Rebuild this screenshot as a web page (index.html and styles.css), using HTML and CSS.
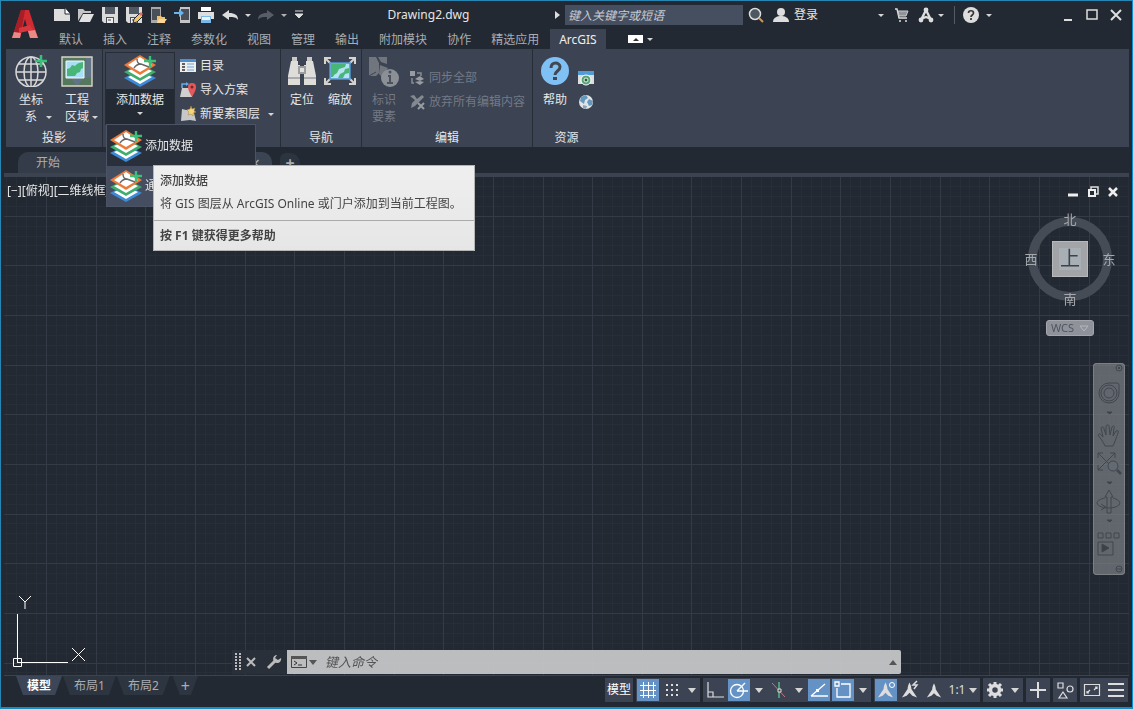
FILE: index.html
```
<!DOCTYPE html>
<html lang="zh-CN">
<head>
<meta charset="UTF-8">
<title>Drawing2.dwg</title>
<link rel="stylesheet" href="styles.css">
</head>
<body>
<svg class="defs" aria-hidden="true">
	<symbol id="layers" viewBox="0 0 32 32">
		<path d="M0 23l16-8 16 8-16 9z" fill="#3c8bd8"/><path d="M4 22l12-5 12 5-12 7z" fill="#fff"/>
		<path d="M0 17l16-8 16 8-16 9z" fill="#3fae6c"/><path d="M4 16l12-5 12 5-12 7z" fill="#fff"/>
		<path d="M0 10l16-10 16 10-16 10z" fill="#ec7a3a"/><path d="M4 10l12-8 12 8-12 7z" fill="#fff"/>
		<path d="M13 4c0 4 2 5 4 5l8 3M17 9c-2 0-5 1-7 4" fill="none" stroke="#666" stroke-width="1.4"/>
		<path d="M26 1v11M20 6h12" stroke="#3bc07a" stroke-width="2.4"/>
	</symbol>
	<symbol id="floppy" viewBox="0 0 18 18">
		<path d="M1 1h16v16H3l-2-2z" fill="#dadada"/><path d="M4 1h10v7H4z" fill="#505864"/><path d="M5 11h8v6H5z" fill="#4b525d"/><path d="M6 12h6v5H6z" fill="#eee"/><path d="M7 14h3" stroke="#444"/>
	</symbol>
	<symbol id="undo" viewBox="0 0 18 18"><path d="M1 9l7-5v3c6 0 9 2 9 7-2-3-4-3-9-3v3z" fill="currentColor"/></symbol>
	<symbol id="person-a" viewBox="0 0 18 18"><path d="M9 1c1 2 2 4 2 7l6 9-5-2-3-3-3 3-5 2 6-9c0-3 1-5 2-7z" fill="currentColor"/></symbol>
</svg>
<div class="window">
	<header class="top">
		<button class="logo" aria-label="A">
			<svg width="28" height="32" viewBox="0 0 28 32"><path d="M1 29L10 1h8l9 28h-8l-5-19-5 19z" fill="#d02a33"/><path d="M10 1h4L9 29H1z" fill="#a81d26"/><path d="M8 19l11-3 3 5-14 3z" fill="#d8363e"/><path d="M1 29l2-6 7 1-1 5zM19 29l-2-7 7-1 3 8z" fill="#e88a86"/></svg>
		</button>
		<div class="rows">
			<div class="titlebar">
				<div class="quick">
					<button aria-label="新建"><svg width="18" height="18"><path d="M1 3h11l5 5v7H1z" fill="#ddd"/><path d="M12 2v6h5" fill="#fff" stroke="#222932"/></svg></button>
					<button aria-label="打开"><svg width="18" height="18"><path d="M1 15V3h5l2 2h6v2H6z" fill="#c4c4c4"/><path d="M6 8h11l-4 8H2z" fill="#e2e2e2"/></svg></button>
					<button aria-label="保存"><svg width="18" height="18"><use href="#floppy"/></svg></button>
					<button aria-label="另存为"><svg width="18" height="18"><use href="#floppy"/><path d="M8 17l1-4 6-6 3 3-6 6z" fill="#f0c56e" stroke="#222932"/><path d="M14 8l2-2 2 2-2 2z" fill="#e06f63"/></svg></button>
					<button aria-label="从云中打开"><svg width="18" height="18"><path d="M2 1h10v16H2z" fill="#a8a8a8"/><path d="M3 3h8v11H3z" fill="#4a505a"/><path d="M8 10h4l1 1h3v6H8z" fill="#eec072"/><path d="M10 13h8l-3 4H8z" fill="#f7d793"/></svg></button>
					<button aria-label="保存到云"><svg width="18" height="18"><path d="M7 1h10v16H7z" fill="#c4c4c4"/><path d="M8 3h8v11H8z" fill="#4a505a"/><path d="M1 6h5V3l5 4-5 4V8H1z" fill="#65b5ef"/></svg></button>
					<button aria-label="打印"><svg width="18" height="18"><path d="M4 1h10v4H4z" fill="#fff"/><path d="M1 6h16v7H1z" fill="#ddd"/><path d="M4 10h10v7H4z" fill="#7bb8e8"/><path d="M5 11h8v3H5z" fill="#e9f3fb"/></svg></button>
					<button aria-label="放弃"><svg width="18" height="18"><use href="#undo"/></svg></button>
					<button class="drop" aria-label="放弃列表"><i class="caret"></i></button>
					<button class="off" aria-label="重做"><svg width="18" height="18"><g transform="matrix(-1 0 0 1 18 0)"><use href="#undo" width="18" height="18"/></g></svg></button>
					<button class="drop off" aria-label="重做列表"><i class="caret"></i></button>
					<button class="more" aria-label="自定义"><svg width="10" height="10"><path d="M1 1h8M1 4h8L5 8z" stroke="#ddd" fill="#ddd"/></svg></button>
				</div>
				<h1 class="title">Drawing2.dwg</h1>
				<button class="expand" aria-label="收拢"><svg width="5" height="8"><path d="M0 0l5 4-5 4z" fill="#ddd"/></svg></button>
				<input class="search" type="text" aria-label="搜索" placeholder="键入关键字或短语">
				<button class="find" aria-label="查找"><svg width="16" height="16"><circle cx="7" cy="7" r="5.500" fill="#4d5763" stroke="#ddd" stroke-width="1.500"/><path d="M11 11l4 4" stroke="#c99a60" stroke-width="2"/></svg></button>
				<button class="login"><svg width="16" height="16"><circle cx="8" cy="5" r="4" fill="#ddd"/><path d="M0 15c0-5 5-6 8-6s8 1 8 6z" fill="#ddd"/></svg><span>登录</span><i class="caret"></i></button>
				<button class="cart" aria-label="商店"><svg width="14" height="14"><path d="M0 1h2l2 9h8" fill="none" stroke="#ddd" stroke-width="1.4"/><path d="M3 3h10l-2 5H4z" fill="#8f939a" stroke="#ccc"/><circle cx="5" cy="13" r="1" fill="#ddd"/><circle cx="11" cy="13" r="1" fill="#ddd"/></svg></button>
				<button class="apps" aria-label="应用"><svg width="16" height="16"><path d="M8 3L3 13M8 3l5 10M3 12l5-2 5 2" fill="none" stroke="#ddd" stroke-width="2.4"/><circle cx="8" cy="3" r="2.4" fill="#ddd"/><circle cx="3" cy="13" r="2.4" fill="#ddd"/><circle cx="13" cy="13" r="2.4" fill="#ddd"/></svg><i class="caret"></i></button>
				<button class="help" aria-label="帮助"><svg width="16" height="16"><circle cx="8" cy="8" r="8" fill="#ddd"/><path d="M5.500 6c0-3 5-3 5 0 0 2-2.500 2-2.500 4M8 11v2" fill="none" stroke="#333" stroke-width="1.7"/></svg><i class="caret"></i></button>
				<div class="wincontrols">
					<button aria-label="最小化"><svg width="14" height="14"><path d="M3 12h8" stroke="#ddd" stroke-width="2"/></svg></button>
					<button aria-label="最大化"><svg width="14" height="14"><path d="M2 2h10v9H2z" fill="none" stroke="#ddd" stroke-width="1.500"/></svg></button>
					<button aria-label="关闭"><svg width="14" height="14"><path d="M2 2l10 10M12 2L2 12" stroke="#ddd" stroke-width="2"/></svg></button>
				</div>
			</div>
			<nav class="tabs">
				<a href="#">默认</a>
				<a href="#">插入</a>
				<a href="#">注释</a>
				<a href="#">参数化</a>
				<a href="#">视图</a>
				<a href="#">管理</a>
				<a href="#">输出</a>
				<a href="#">附加模块</a>
				<a href="#">协作</a>
				<a href="#">精选应用</a>
				<a href="#" class="active">ArcGIS</a>
				<button aria-label="最小化功能区"><svg width="15" height="8"><path d="M0 0h15v8H0z" fill="#fff"/><path d="M5 6l3-3 3 3z" fill="#333"/></svg><i class="caret"></i></button>
			</nav>
		</div>
	</header>

	<section class="ribbon">
		<div class="panel">
			<div class="tools">
				<button class="big">
					<svg width="32" height="32"><g fill="none" stroke="#d8d8d8" stroke-width="1.500"><circle cx="16" cy="17" r="15"/><ellipse cx="16" cy="17" rx="7" ry="15"/><path d="M16 2v30M1 17h30M4 9h24M4 25h24"/></g><path d="M26 0v12M20 6h12" stroke="#3bc07a" stroke-width="2.500"/></svg>
					<span>坐标<br>系</span><i class="caret"></i>
				</button>
				<button class="big">
					<svg width="32" height="32"><path d="M1 2h30v29H1z" fill="#55785d" stroke="#d8d5c8" stroke-width="1.400"/><path d="M25 3h5v19l-8 2v-4h3zM11 22h10v3l-4 5h-2l-4-5z" fill="#617386"/><path d="M5 6h18v17H5z" fill="#a9dff5" stroke="#f4f8fa"/><path d="M6 21v-7l3-1 2-3 3 1 2-2 2-1 4-1v6l-2 1-1 3-3 1-2 3z" fill="#49b678"/></svg>
					<span>工程<br>区域</span><i class="caret"></i>
				</button>
			</div>
			<h2>投影</h2>
		</div>
		<div class="panel data">
			<div class="tools">
				<button class="big split">
					<svg width="32" height="32"><use href="#layers"/></svg>
					<span>添加数据</span><i class="caret"></i>
				</button>
				<div class="small">
					<button><svg width="16" height="16"><path d="M0 1h16v13H0z" fill="#eee"/><path d="M0 1h16v3H0z" fill="#4b8fd0"/><path d="M2 6h3M2 9h3M2 12h3" stroke="#333" stroke-width="1.500"/><path d="M7 6h7M7 9h7M7 12h7" stroke="#6ba6da"/></svg>目录</button>
					<button><svg width="16" height="16"><path d="M2 6h10v9H0z" fill="#d0d0d0"/><path d="M2 6V2h5" stroke="#65aee8" stroke-width="1.500" fill="none"/><path d="M6 0l3 2-3 2z" fill="#65aee8"/><path d="M12 15C9 10 8 7 8 5a4 4 0 018 0c0 2-1 5-4 10z" fill="#e45859"/><circle cx="12" cy="5" r="1.500" fill="#78272b"/></svg>导入方案</button>
					<button><svg width="16" height="16"><path d="M2 3l4 1 7-1 3 12-6-1-9 1z" fill="#c8c8c8"/><path d="M11 0l1 3 3-1-1 3 2 1-3 1v3l-2-2-3 1 1-3-2-2 3-1z" fill="#f6d579" stroke="#a78547" stroke-width=".5"/></svg>新要素图层<i class="caret"></i></button>
				</div>
			</div>
		</div>
		<div class="panel navi">
			<div class="tools">
				<button class="big">
					<svg width="32" height="32"><path d="M5 6h7v4h2v20H2v-9zM20 6h7l3 15v9H18V10h2z" fill="#deddda"/><path d="M6 2h5v4H6zM21 2h5v4h-5z" fill="#cbc9c5"/><path d="M12 11h8v8h-8z" fill="#9d9d9e"/><path d="M14 13h4v4h-4z" fill="#e2e1df"/><path d="M2 23h12M18 23h12" stroke="#77797e"/></svg>
					<span>定位</span>
				</button>
				<button class="big">
					<svg width="32" height="32"><g stroke="#d6d3cf" stroke-width="2" fill="none"><path d="M1 9V3h6M25 3h6v6M31 23v6h-6M7 29H1v-6M2 4l5 5M30 4l-5 5M2 28l5-5M30 28l-5-5"/></g><path d="M6 8h20v16H6z" fill="#b5e2f5" stroke="#5095d2" stroke-width="1.500"/><path d="M7 9h15l-1 3-6 2-2 4-3 2-1 2H7zM14 23l2-4 4-2 1-3 4-1v5l-4 1-2 4z" fill="#49b678"/></svg>
					<span>缩放</span>
				</button>
			</div>
			<h2>导航</h2>
		</div>
		<div class="panel edit">
			<div class="tools">
				<button class="big" disabled>
					<svg width="32" height="32"><path d="M1 2h7l3 6v10l-3 3H1zM10 2h9v7l-6-2zM12 10l8 3-6 9-3-3z" fill="#71757e"/><path d="M1 21l7-4" stroke="#3c4453"/><circle cx="22" cy="23" r="9" fill="#8b8f96"/><path d="M20 21h2v7M19 28h6" fill="none" stroke="#4b525f" stroke-width="2"/><circle cx="22" cy="17" r="1.500" fill="#4b525f"/></svg>
					<span>标识<br>要素</span>
				</button>
				<div class="small low">
					<button disabled><svg width="16" height="16"><path d="M1 1h5v5H1z" fill="#989ba1"/><path d="M8 3h4v3M3 8v5h2" fill="none" stroke="#878b92" stroke-width="1.500"/><path d="M6 9l5-3 4 3-4 2zM6 12l5 3 4-3-4-1z" fill="#989ba1"/></svg>同步全部</button>
					<button disabled><svg width="16" height="16"><path d="M1 2l4-1 3 4 5-4 2 2-9 9-4 2 1-5 3-3z" fill="#858990"/><path d="M9 9l6 6M15 9l-6 6" stroke="#989ba1" stroke-width="2"/></svg>放弃所有编辑内容</button>
				</div>
			</div>
			<h2>编辑</h2>
		</div>
		<div class="panel res">
			<div class="tools">
				<button class="big">
					<svg width="32" height="32"><circle cx="16" cy="16" r="14" fill="#7fc1f4"/><path d="M12 13c0-7 9-6 9-1 0 4-5 4-5 8" fill="none" stroke="#43474f" stroke-width="3"/><path d="M14 22h4v3h-4z" fill="#43474f"/></svg>
					<span>帮助</span>
				</button>
				<div class="small low">
					<button aria-label="论坛"><svg width="16" height="16"><path d="M0 1h16v13H0z" fill="#ddd"/><path d="M0 1h16v4H0z" fill="#519bd8"/><circle cx="8" cy="10" r="5" fill="#55a577" stroke="#fff"/><circle cx="8" cy="10" r="2" fill="#245f3d" stroke="#eee"/></svg></button>
					<button aria-label="关于"><svg width="16" height="16"><circle cx="8" cy="8" r="7" fill="#e2e4e6"/><path d="M3 3l5-2 2 3-3 2-1 4-4-3zM11 5l4 2-1 4-3 1-2-4z" fill="#6598bd"/><path d="M5 11l4 1-1 3-3-1z" fill="#8ba5b8"/></svg></button>
				</div>
			</div>
			<h2>资源</h2>
		</div>
		<div class="menu">
			<button><svg width="32" height="32"><use href="#layers"/></svg>添加数据</button>
			<button class="lit"><svg width="32" height="32"><use href="#layers"/></svg>通过</button>
			<div class="tooltip" role="tooltip">
				<b>添加数据</b>
				<p>将 GIS 图层从 ArcGIS Online 或门户添加到当前工程图。</p>
				<strong>按 F1 键获得更多帮助</strong>
			</div>
		</div>
	</section>

	<nav class="files">
		<a href="#" class="start">开始</a>
		<a href="#" class="drawing">×</a>
		<button aria-label="新图形">+</button>
	</nav>

	<main class="drawingarea">
		<canvas id="grid"></canvas>
		<div class="viewlabel">[−][俯视][二维线框]</div>
		<div class="docbuttons">
			<button aria-label="最小化视口"><svg width="12" height="12"><path d="M1 9h10" stroke="#eee" stroke-width="3"/></svg></button>
			<button aria-label="还原视口"><svg width="12" height="12"><path d="M4 3V1h7v7H9" fill="none" stroke="#ddd" stroke-width="1.500"/><path d="M2 4h6v6H2z" fill="none" stroke="#eee" stroke-width="2"/></svg></button>
			<button aria-label="关闭视口"><svg width="12" height="12"><path d="M2 2l8 8M10 2l-8 8" stroke="#eee" stroke-width="2.500"/></svg></button>
		</div>
		<div class="cube">
			<span class="north">北</span>
			<span class="west">西</span>
			<button class="face">上</button>
			<span class="east">东</span>
			<span class="south">南</span>
		</div>
		<button class="wcs">WCS <svg width="10" height="7"><path d="M1 1h8L5 6z" fill="none" stroke="#b3b6bc"/></svg></button>
		<div class="navbar">
			<svg width="32" height="212" viewBox="0 0 32 212" fill="none" stroke="#41474f">
				<circle cx="26" cy="5" r="3"/><path d="M25 4l2 2M27 4l-2 2"/>
				<path d="M16 20h8q2 0 2 2v8a10 10 0 11-10-10z"/><circle cx="16" cy="30" r="5"/><circle cx="16" cy="30" r="8"/>
				<path d="M14 49h5l-2 2z" fill="#3b4149"/>
				<path d="M12 83c-2-5-5-8-7-11 1-2 3-1 5 2l-2-9c1-2 3-1 3 1l2 6V63c1-2 3-1 3 0l1 9 2-8c1-2 3-1 2 1l-1 8 3-5c2-1 3 0 2 2-2 5-3 9-5 13z"/>
				<path d="M5 90l17 17M22 90L5 107M5 95v-5h5M17 90h5v5M5 102v5h5"/><circle cx="20" cy="103" r="5" fill="#646a72"/><path d="M24 107l4 4" stroke-width="2.500"/>
				<path d="M14 119h5l-2 2z" fill="#3b4149"/>
				<path d="M14 150v-16h-2l4-7 4 7h-2v16z"/><path d="M12 135c-11 2-11 9 3 10 13 0 16-7 5-10M8 141l5 3-5 3"/>
				<path d="M14 157h5l-2 2z" fill="#3b4149"/>
				<path d="M5 170h5v5H5zM13 170h5v5h-5zM21 170h5v5h-5zM5 179h15v13H5z"/><path d="M9 181l7 4-7 4z" fill="#3b4149"/>
				<circle cx="26" cy="206" r="3"/><path d="M24 206h4"/>
			</svg>
		</div>
		<svg class="ucs" width="80" height="76" fill="none" stroke="#fff"><path d="M13.500 68V20M18 68.500h46M9.500 64.500h8v8h-8zM13.500 64v5M13 68.500h5" stroke-width="1"/><path d="M15 2l6 6 6-6M21 8v7M68 54l13 13M81 54L68 67"/></svg>
		<form class="command">
			<div class="handle">
				<svg width="6" height="18"><path d="M1 0v18M5 0v18" stroke="#bbb" stroke-width="2" stroke-dasharray="2 1"/></svg>
				<button type="button" aria-label="关闭命令行"><svg width="10" height="10"><path d="M1 1l8 8M9 1L1 9" stroke="#bbb" stroke-width="2"/></svg></button>
				<button type="button" class="wrench" aria-label="自定义命令行"><svg width="16" height="16"><path d="M2 14l8-8" stroke="#bbb" stroke-width="3"/><path d="M15 4a4 4 0 11-4-3L9 4l3 2z" fill="#bbb"/></svg></button>
			</div>
			<div class="line">
				<button type="button" aria-label="最近使用的命令"><svg width="16" height="12"><path d="M.5.500h15v11H.5z" fill="none" stroke="#444"/><path d="M0 0h16v3H0z" fill="#555"/><path d="M3 5l3 2-3 2M7 9h4" fill="none" stroke="#333"/></svg><i class="caret wide"></i></button>
				<input type="text" aria-label="命令" placeholder="键入命令">
				<button type="button" aria-label="命令历史"><svg width="8" height="5"><path d="M0 5l4-5 4 5z" fill="#555"/></svg></button>
			</div>
		</form>
	</main>

	<footer class="bottom">
		<nav class="layouts">
			<a href="#" class="active">模型</a>
			<a href="#">布局1</a>
			<a href="#">布局2</a>
			<button aria-label="新布局">+</button>
		</nav>
		<div class="status">
			<div class="group"><button class="text">模型</button></div>
			<div class="group">
				<button class="on" aria-label="栅格"><svg width="20" height="20"><path d="M5.500 2v16M10.500 2v16M15.500 2v16M2 5.500h16M2 10.500h16M2 15.500h16" fill="none" stroke="#fff"/></svg></button>
				<button aria-label="捕捉"><svg width="20" height="20"><path d="M4 5h13M4 10h13M4 15h13" stroke="#ddd" stroke-width="2" stroke-dasharray="2 3"/></svg></button>
				<button class="drop" aria-label="捕捉设置"><i class="caret wide"></i></button>
			</div>
			<div class="group">
				<button aria-label="正交"><svg width="20" height="20"><path d="M3 2v15h16M3 12h5v5" fill="none" stroke="#ddd" stroke-width="1.200"/></svg></button>
				<button class="on" aria-label="极轴追踪"><svg width="20" height="20"><circle cx="8" cy="11" r="6.500" fill="none" stroke="#fff" stroke-width="1.300"/><path d="M8 11h11M8 11l8-8" stroke="#fff" stroke-width="1.300"/></svg></button>
				<button class="drop" aria-label="极轴设置"><i class="caret wide"></i></button>
				<button aria-label="等轴测"><svg width="20" height="20"><path d="M3 3l13 14" stroke="#c87575"/><path d="M10 2v16" stroke="#50b984" stroke-width="1.500"/><path d="M9 9h3v3H9z" fill="#3c4453" stroke="#ddd"/></svg></button>
				<button class="drop" aria-label="等轴测设置"><i class="caret wide"></i></button>
				<button class="on" aria-label="对象捕捉追踪"><svg width="20" height="20"><path d="M2 16L16 4M2 16h17" stroke="#fff" stroke-width="1.300"/><path d="M7 9h3v3H7z" fill="#fff"/></svg></button>
				<button class="on" aria-label="对象捕捉"><svg width="20" height="20"><path d="M8 4h9v13H4V8" fill="none" stroke="#fff" stroke-width="1.300"/><path d="M2 2h4v4H2z" fill="none" stroke="#fff" stroke-width="1.300"/></svg></button>
				<button class="drop" aria-label="捕捉列表"><i class="caret wide"></i></button>
			</div>
			<div class="group">
				<button class="on" aria-label="注释可见性"><svg width="20" height="20"><use href="#person-a" x="1" y="1" width="17" height="18"/><circle cx="16" cy="5" r="2.500" fill="#6592c5" stroke="#fff"/></svg></button>
				<button aria-label="自动缩放"><svg width="20" height="20"><use href="#person-a" x="1" y="1" width="17" height="18"/><path d="M17 1l-4 4h4l-3 4" stroke="#ddd" fill="none" stroke-width="1.500"/></svg></button>
				<button aria-label="注释"><svg width="20" height="20"><use href="#person-a" x="2" y="2" width="16" height="17"/></svg></button>
				<button class="scale">1:1<i class="caret wide"></i></button>
			</div>
			<div class="group">
				<button aria-label="切换工作空间"><svg width="20" height="20"><circle cx="10" cy="10" r="4.500" fill="none" stroke="#ddd" stroke-width="3.500"/><path d="M10 2v3M10 15v3M2 10h3M15 10h3M4 4l3 3M13 13l3 3M16 4l-3 3M7 13l-3 3" stroke="#ddd" stroke-width="3"/></svg></button>
				<button class="drop" aria-label="工作空间列表"><i class="caret wide"></i></button>
			</div>
			<div class="group"><button aria-label="注释监视器"><svg width="20" height="20"><path d="M10 2v16M2 10h16" stroke="#ddd" stroke-width="2"/></svg></button></div>
			<div class="group"><button aria-label="隔离对象"><svg width="20" height="20"><path d="M3 3h5v5H3zM8 12l4 6H4z" fill="none" stroke="#ddd" stroke-width="1.200"/><circle cx="15" cy="9" r="3" fill="none" stroke="#ddd" stroke-width="1.200"/></svg></button></div>
			<div class="group">
				<button aria-label="全屏显示"><svg width="20" height="20"><path d="M2.500 4.500h15v11h-15zM5 13l3-3M12 10l3-3M5 11v2h2M13 7h2v2" fill="none" stroke="#ddd" stroke-width="1.200"/></svg></button>
				<button aria-label="自定义"><svg width="20" height="20"><path d="M2 4h16M2 10h16M2 16h16" stroke="#ddd" stroke-width="2"/></svg></button>
			</div>
		</div>
	</footer>
</div>
<script src="grid.js"></script>
</body>
</html>
```

FILE: styles.css
```
* {
	box-sizing: border-box;
}
body {
	margin: 0;
	font-family: "Noto Sans", "Noto Sans CJK SC", sans-serif;
	font-size: 12px;
	line-height: 16px;
	color: #e6e6e6;
	background-color: #222932;
}
button, input {
	font: inherit;
	color: inherit;
	background: none;
	border: 0;
	padding: 0;
	margin: 0;
}
button {
	display: flex;
	align-items: center;
	justify-content: center;
	flex: none;
	white-space: nowrap;
}
a {
	color: inherit;
	text-decoration: none;
}
svg {
	display: block;
	flex: none;
}
h1, h2, p {
	margin: 0;
	font-size: 12px;
	font-weight: normal;
}
.defs {
	position: absolute;
	width: 0;
	height: 0;
}
.window {
	display: flex;
	flex-direction: column;
	height: 100vh;
	padding: 0 3px;
	border: 1px solid #2687b5;
	border-right-color: #0a90d4;
	border-bottom: 2px solid #148dc5;
}
.caret {
	width: 0;
	height: 0;
	border: 3px solid transparent;
	border-top-color: #d5d5d5;
	border-bottom: 0;
}
.caret.wide {
	border-width: 4px;
	border-top-width: 5px;
	border-bottom: 0;
}

/* title bar */
.top {
	display: flex;
	height: 48px;
}
.logo {
	width: 42px;
}
.rows {
	flex: 1;
}
.titlebar {
	display: flex;
	align-items: center;
	height: 28px;
	padding-left: 4px;
}
.quick {
	display: flex;
	color: #ddd;
}
.quick button {
	width: 24px;
	height: 24px;
}
.quick .drop {
	width: 12px;
}
.quick .more {
	width: 18px;
}
.quick .off {
	color: #666b73;
	opacity: .8;
}
.title {
	flex: 1;
	text-align: center;
}
.expand {
	width: 16px;
}
.search {
	width: 178px;
	height: 20px;
	padding: 0 3px;
	background-color: #464f60;
}
.search::placeholder {
	font-style: italic;
	color: #c8ccd2;
	opacity: 1;
}
.find {
	width: 26px;
}
.login {
	width: 120px;
	gap: 5px;
	justify-content: flex-start;
	padding: 0 4px;
}
.login .caret {
	margin-left: auto;
	margin-right: 1px;
}
.cart {
	width: 26px;
}
.apps {
	gap: 4px;
	padding: 0 10px 0 3px;
	border-right: 1px solid #545b66;
	height: 18px;
}
.help {
	gap: 7px;
	padding: 0 8px;
}
.wincontrols {
	display: flex;
	margin-left: 56px;
	padding-right: 1px;
}
.wincontrols button {
	width: 24px;
	height: 24px;
}
.tabs {
	display: flex;
	height: 20px;
	padding-left: 3px;
	color: #a9adb4;
}
.tabs a {
	flex: none;
	padding: 0 10px;
	line-height: 22px;
}
.tabs .active {
	margin-left: 1px;
	padding: 0 9px;
	color: #eee;
	background-color: #3c4453;
}
.tabs button {
	gap: 4px;
	margin-left: 22px;
}

/* ribbon */
.ribbon {
	position: relative;
	display: flex;
	height: 98px;
	margin: 0 0 0 2px;
	background-color: #3c4453;
}
.panel {
	display: flex;
	flex-direction: column;
	justify-content: space-between;
	border-right: 1px solid #262d37;
	padding: 0 3px;
}
.panel h2 {
	text-align: center;
	line-height: 18px;
}
.tools {
	display: flex;
	gap: 2px;
}
.big {
	display: grid;
	grid-template-columns: 8px 1fr 8px;
	grid-row-gap: 4px;
	width: 44px;
	padding-top: 6px;
	line-height: 17px;
	align-content: start;
	justify-items: center;
}
.big svg {
	grid-column: 1 / 4;
}
.big span {
	grid-column: 2;
}
.big .caret {
	align-self: end;
	margin-bottom: 6px;
}
.data {
	width: 178px;
	padding: 0 2px;
}
.big.split {
	width: 70px;
	height: 73px;
	margin-top: 3px;
	padding-top: 2px;
	border: 1px solid #262d37;
	background: linear-gradient(#3c4453 36px, #232a33 36px);
}
.split .caret {
	grid-column: 2;
	margin: 0;
}
.small {
	padding: 5px 0 0 3px;
}
.small.low {
	padding-top: 17px;
}
.small button {
	gap: 4px;
	height: 24px;
}
.small .caret {
	margin-left: 4px;
}
.navi {
	padding: 0 2px;
}
.navi .tools, .edit .tools, .res .tools {
	gap: 0;
}
.navi .big {
	width: 38px;
	grid-template-columns: 1px 1fr 1px;
}
.edit {
	width: 171px;
	padding: 0;
}
button:disabled {
	color: #737985;
}
.res {
	border: 0;
	padding: 0;
}
.res .small {
	padding: 17px 6px 0 1px;
}

/* open split menu and its tip */
.menu {
	position: absolute;
	z-index: 2;
	left: 100px;
	top: 75px;
	width: 150px;
	padding-top: 1px;
	border: 1px solid #4b5364;
	background-color: #29303b;
}
.menu button {
	width: 100%;
	height: 40px;
	padding-left: 3px;
	gap: 3px;
	justify-content: flex-start;
}
.menu .lit {
	background-color: #454e60;
}
.tooltip {
	position: absolute;
	left: 46px;
	top: 40px;
	width: max-content;
	min-width: 322px;
	border: 1px solid #b5b5b5;
	background: linear-gradient(#efefef, #e6e6e6);
	color: #444;
}
.tooltip b {
	display: block;
	padding: 7px 6px 0;
	font-weight: 500;
}
.tooltip p {
	padding: 7px 6px 8px;
}
.tooltip strong {
	display: block;
	padding: 7px 6px 6px;
	border-top: 1px solid #aaa;
}

/* file tabs */
.files {
	display: flex;
	align-items: flex-end;
	height: 30px;
	padding-left: 14px;
	border-bottom: 4px solid #3b4351;
	color: #a9adb4;
}
.files a {
	height: 21px;
	line-height: 22px;
	background-color: #343c49;
	border-radius: 10px 10px 0 0;
}
.files .start {
	width: 96px;
	padding-left: 18px;
}
.files .drawing {
	width: 158px;
	padding-right: 12px;
	text-align: right;
	font-size: 16px;
	background-color: #3b4453;
}
.files button {
	width: 20px;
	height: 20px;
	margin-left: 8px;
	font-size: 16px;
	font-weight: bold;
	background-color: #2c343f;
	border-radius: 6px 10px 0 0;
}

/* drawing area */
.drawingarea {
	position: relative;
	flex: 1;
	min-height: 0;
}
#grid {
	position: absolute;
	width: 100%;
	height: 100%;
}
.viewlabel {
	position: absolute;
	left: 3px;
	top: 6px;
}
.docbuttons {
	position: absolute;
	right: 10px;
	top: 9px;
	display: flex;
	gap: 8px;
}
.cube {
	position: absolute;
	right: 12px;
	top: 34px;
	width: 94px;
	display: grid;
	grid-template-columns: 16px 1fr 16px;
	grid-template-rows: 16px 1fr 16px;
	height: 96px;
	align-items: center;
	justify-items: center;
	font-size: 13px;
	color: #a5a8ac;
}
.cube::before {
	content: "";
	box-sizing: border-box;
	position: absolute;
	left: 5px;
	top: 6px;
	width: 84px;
	height: 84px;
	border: 9px solid #454c56;
	border-radius: 50%;
}
.cube > * {
	z-index: 1;
}
.north, .south {
	grid-column: 1 / 4;
}
.face {
	width: 36px;
	height: 36px;
	border: 1px solid #b8b9bb;
	background: linear-gradient(#a9b0b5, #a9b0b5) center / 22px 22px no-repeat #a3a4a7;
	color: #3b434c;
	font-size: 20px;
}
.wcs {
	position: absolute;
	right: 35px;
	top: 143px;
	width: 48px;
	height: 16px;
	gap: 5px;
	border-radius: 3px;
	border: 1px solid #a4a6ac;
	background-color: #8f929a;
	color: #50555e;
	font-size: 11px;
}
.navbar {
	position: absolute;
	right: 4px;
	top: 186px;
	border-radius: 4px;
	background-color: rgba(130, 135, 140, .65);
	box-shadow: inset 0 0 0 1px #7c8085;
}
.ucs {
	position: absolute;
	left: 0;
	bottom: 5px;
	overflow: visible;
}
.command {
	position: absolute;
	left: 228px;
	right: 228px;
	bottom: 1px;
	display: flex;
	height: 24px;
}
.handle {
	display: flex;
	align-items: center;
	width: 55px;
	padding: 0 5px 0 3px;
	gap: 5px;
	background-color: #29303a;
}
.wrench {
	margin-left: auto;
}
.line {
	display: flex;
	flex: 1;
	padding: 0 4px;
	background-color: rgba(196, 197, 199, .95);
	border-radius: 0 2px 2px 0;
}
.line button {
	gap: 2px;
}
.line .caret {
	border-top-color: #555;
}
.line input {
	flex: 1;
	padding: 0 8px;
	font-size: 13px;
	color: #333;
}
.line input::placeholder {
	font-style: italic;
	color: #555;
	opacity: 1;
}

/* layout tabs and status bar */
.bottom {
	display: flex;
	justify-content: space-between;
	height: 32px;
	border-top: 1px solid #3b4350;
}
.layouts {
	display: flex;
	gap: 1px;
	padding-left: 12px;
	color: #a9adb4;
}
.layouts a, .layouts button {
	height: 19px;
	padding: 0 11px;
	line-height: 20px;
	background-color: #2d3541;
	clip-path: polygon(0 0, 100% 0, calc(100% - 7px) 100%, 7px 100%);
}
.layouts .active {
	color: #fff;
	font-weight: bold;
	background-color: #3c4656;
}
.layouts button {
	font-size: 16px;
	margin-left: 2px;
	padding: 0 8px;
}
.status {
	display: flex;
	gap: 3px;
	padding: 2px 1px 0 0;
	color: #ddd;
}
.group {
	display: flex;
	align-items: center;
	gap: 2px;
	height: 24px;
	padding: 0 1px;
	background-color: #3c4453;
}
.group button {
	width: 22px;
	height: 22px;
}
.group .drop {
	width: 14px;
}
.group .text {
	width: 26px;
	color: #fff;
}
.group .scale {
	width: 32px;
	gap: 4px;
}
.group .on {
	background-color: #6592c5;
}
```

FILE: grid.js
```
var canvas = document.getElementById("grid");

function drawGrid(){
	var w = canvas.clientWidth;
	var h = canvas.clientHeight;
	var step = 49.65 / 5;
	var x0 = 42.5;
	var y0 = h - 12.5;
	var ctx = canvas.getContext("2d");
	canvas.width = w;
	canvas.height = h;
	// minor lines first so the major ones stay on top
	for(var pass=0;pass<2;pass++){
		ctx.fillStyle = pass == 0 ? "#272e38" : "#343b46";
		for(var i=-4;x0+i*step<w;i++){
			if((i % 5 == 0) == (pass == 1)){
				ctx.fillRect(Math.floor(x0+i*step), 0, 1, h);
			}
		}
		for(var j=-1;y0-j*step>0;j++){
			if((j % 5 == 0) == (pass == 1)){
				ctx.fillRect(0, Math.round(y0-j*step), w, 1);
			}
		}
	}
}

drawGrid();
window.addEventListener("resize", drawGrid);
```
